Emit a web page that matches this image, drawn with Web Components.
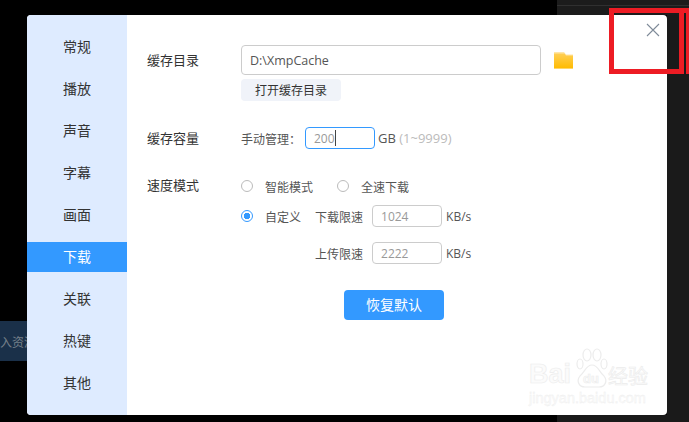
<!DOCTYPE html>
<html lang="zh-CN">
<head>
<meta charset="utf-8">
<title>设置</title>
<style>
html, body { margin: 0; padding: 0; background: #000; }
body { font-family: "Noto Sans CJK SC", "Open Sans", sans-serif; }
</style>
</head>
<body>
<xl-desktop>
  <xl-dialog>
    <xl-nav slot="nav">
      <xl-nav-item>常规</xl-nav-item>
      <xl-nav-item>播放</xl-nav-item>
      <xl-nav-item>声音</xl-nav-item>
      <xl-nav-item>字幕</xl-nav-item>
      <xl-nav-item>画面</xl-nav-item>
      <xl-nav-item active>下载</xl-nav-item>
      <xl-nav-item>关联</xl-nav-item>
      <xl-nav-item>热键</xl-nav-item>
      <xl-nav-item>其他</xl-nav-item>
    </xl-nav>
    <xl-field label="缓存目录" style="height:78px">
      <xl-dir-picker value="D:\XmpCache" action="打开缓存目录"></xl-dir-picker>
    </xl-field>
    <xl-field label="缓存容量" style="height:47px">
      <xl-cache-size value="200"></xl-cache-size>
    </xl-field>
    <xl-field label="速度模式">
      <xl-speed-mode></xl-speed-mode>
    </xl-field>
    <xl-button primary>恢复默认</xl-button>
  </xl-dialog>
</xl-desktop>

<script>
// small helper, every element renders the same way
class XlBase extends HTMLElement {
  constructor() {
    super();
    this.attachShadow({ mode: "open" });
  }
  connectedCallback() {
    this.shadowRoot.innerHTML = this.html;
  }
}

// what is left of the player window behind the dialog
class XlDesktop extends XlBase {
  get html() {
    return `
<style>
:host {
  display: block;
  position: relative;
  overflow: hidden;
  box-sizing: border-box;
  width: 689px;
  height: 422px;
  padding: 15px 0 0 27px;
  background-color: #000;
  background-image:
    linear-gradient(#1c1c1c, #1c1c1c),
    linear-gradient(#1a1a1a, #1a1a1a),
    linear-gradient(#1a1a1a, #1a1a1a);
  background-repeat: no-repeat;
  background-size: 132px 15px, 22px 422px, 132px 7px;
  background-position: 557px 0, 667px 0, 557px 415px;
}
.line {
  position: absolute;
  left: 557px;
  top: 5px;
  width: 132px;
  height: 1px;
  background: #303030;
}
.strip {
  position: absolute;
  left: 0;
  top: 321px;
  width: 27px;
  height: 40px;
  background: #1a3049;
  color: #77808a;
  font-size: 12px;
  line-height: 41px;
  white-space: nowrap;
}
.mark {
  position: absolute;
  left: 609px;
  top: 8px;
}
</style>
<div class="line"></div>
<div class="strip">入资源</div>
<slot></slot>
<xl-watermark></xl-watermark>
<svg class="mark" width="80" height="66" viewBox="0 0 80 66" fill="none" stroke="#ed1c24" stroke-width="5">
  <path d="M80 2.5H2.5V63.5H72.5V0"/>
  <path d="M79.5 0V66"/>
</svg>`;
  }
}

class XlDialog extends XlBase {
  get html() {
    return `
<style>
:host {
  display: flex;
  position: relative;
  overflow: hidden;
  width: 640px;
  height: 400px;
  border-radius: 4px;
  background: #fff;
  color: #333;
}
.main {
  flex: 1;
  padding: 30px 0 0 20px;
}
.close {
  position: absolute;
  top: 8px;
  right: 7px;
  width: 14px;
  height: 14px;
}
</style>
<slot name="nav"></slot>
<div class="main">
  <slot></slot>
</div>
<svg class="close" viewBox="0 0 14 14" fill="none" stroke="#7f8b99" stroke-width="1.1">
  <path d="M1 1L13 13M13 1L1 13"/>
</svg>`;
  }
}

class XlNav extends XlBase {
  get html() {
    return `
<style>
:host {
  display: flex;
  flex-direction: column;
  gap: 12px;
  box-sizing: border-box;
  flex: 0 0 100px;
  padding-top: 17px;
  background: #deebff;
}
</style>
<slot></slot>`;
  }
}

class XlNavItem extends XlBase {
  get html() {
    return `
<style>
:host {
  display: block;
  height: 30px;
  line-height: 28px;
  text-align: center;
  font-size: 14px;
  color: #333;
}
:host([active]) {
  background: #3399ff;
  color: #fff;
}
</style>
<slot></slot>`;
  }
}

class XlField extends XlBase {
  get html() {
    return `
<style>
:host {
  display: grid;
  grid-template-columns: 94px 1fr;
  align-items: start;
}
.label {
  font-size: 13px;
  line-height: 30px;
  color: #333;
}
</style>
<div class="label">${this.getAttribute("label")}</div>
<div><slot></slot></div>`;
  }
}

class XlInput extends XlBase {
  get html() {
    const caret = this.hasAttribute("focused") ? '<i class="caret"></i>' : "";
    return `
<style>
:host {
  display: flex;
  align-items: center;
  box-sizing: border-box;
  flex: 0 0 70px;
  width: 70px;
  height: 22px;
  padding-left: 8px;
  border: 1px solid #ccc;
  border-radius: 4px;
  background: #fff;
  color: #999;
  font-family: "Open Sans", "Noto Sans CJK SC", sans-serif;
  font-size: 12px;
}
:host([focused]) { border-color: #3399ff; }
.caret {
  width: 1px;
  height: 16px;
  background: #444;
}
</style>
<span>${this.getAttribute("value")}</span>${caret}`;
  }
}

class XlDirPicker extends XlBase {
  get html() {
    return `
<style>
:host { display: block; }
.row {
  display: flex;
  align-items: center;
  gap: 12px;
}
.path {
  box-sizing: border-box;
  width: 300px;
  height: 30px;
  padding-left: 8px;
  border: 1px solid #ccc;
  border-radius: 4px;
  color: #555;
  font-family: "Open Sans", sans-serif;
  font-size: 12.5px;
  line-height: 29px;
}
.open {
  width: 100px;
  height: 22px;
  margin-top: 4px;
  border-radius: 4px;
  background: #f0f3f9;
  color: #333;
  font-size: 12px;
  line-height: 22px;
  text-align: center;
}
</style>
<div class="row">
  <div class="path">${this.getAttribute("value")}</div>
  <svg width="21" height="18" viewBox="0 0 21 18">
    <defs>
      <linearGradient id="f" x1="0" y1="0" x2="0" y2="1">
        <stop offset="0" stop-color="#ffcf55"/>
        <stop offset="1" stop-color="#ffbb00"/>
      </linearGradient>
    </defs>
    <path d="M1 1H11L13 3.5H20V17.5H1Z" fill="#ffe6a8"/>
    <path d="M1 2.5H11.5L13 4.5H20V17.5H1Z" fill="url(#f)"/>
  </svg>
</div>
<div class="open">${this.getAttribute("action")}</div>`;
  }
}

class XlCacheSize extends XlBase {
  get html() {
    return `
<style>
:host {
  display: flex;
  align-items: center;
  height: 22px;
  margin-top: 4px;
  font-size: 12px;
  color: #555;
}
.lead { width: 64px; }
.unit {
  margin-left: 3px;
  font-family: "Open Sans", sans-serif;
  font-size: 13px;
}
.unit span { color: #bbb; }
</style>
<div class="lead">手动管理：</div>
<xl-input focused value="${this.getAttribute("value")}"></xl-input>
<div class="unit">GB <span>(1~9999)</span></div>`;
  }
}

class XlRadio extends XlBase {
  get html() {
    return `
<style>
:host {
  display: inline-flex;
  align-items: center;
  gap: 12px;
  font-size: 12px;
  color: #555;
}
.dot {
  box-sizing: border-box;
  width: 12px;
  height: 12px;
  border: 1px solid #bbb;
  border-radius: 50%;
  background: #fff;
}
:host([checked]) .dot {
  border-color: #3399ff;
  background: radial-gradient(circle, #3399ff 0 3px, #fff 3.5px);
}
</style>
<div class="dot"></div>
<slot></slot>`;
  }
}

class XlSpeedMode extends XlBase {
  get html() {
    return `
<style>
:host {
  display: flex;
  flex-direction: column;
  margin-top: 5px;
  font-size: 12px;
  color: #555;
}
.row {
  display: flex;
  align-items: center;
  height: 22px;
}
.custom { margin-top: 8px; }
.upload { margin-top: 15px; padding-left: 74px; }
xl-radio + xl-radio { margin-left: 24px; }
.custom xl-radio { margin-right: 14px; }
.t { margin-right: 9px; }
.u {
  margin-left: 4px;
  font-family: "Open Sans", sans-serif;
}
</style>
<div class="row">
  <xl-radio>智能模式</xl-radio>
  <xl-radio>全速下载</xl-radio>
</div>
<div class="row custom">
  <xl-radio checked>自定义</xl-radio>
  <div class="t">下载限速</div>
  <xl-input value="1024"></xl-input>
  <div class="u">KB/s</div>
</div>
<div class="row upload">
  <div class="t">上传限速</div>
  <xl-input value="2222"></xl-input>
  <div class="u">KB/s</div>
</div>`;
  }
}

class XlButton extends XlBase {
  get html() {
    return `
<style>
:host {
  display: block;
  width: 100px;
  height: 30px;
  margin: 26px 0 0 197px;
  border-radius: 4px;
  background: #3399ff;
  color: #fff;
  font-size: 14px;
  line-height: 29px;
  text-align: center;
}
</style>
<slot></slot>`;
  }
}

// site stamp pasted over the corner of the screenshot
class XlWatermark extends XlBase {
  get html() {
    return `
<style>
:host {
  position: absolute;
  left: 529px;
  top: 348px;
  width: 124px;
  height: 58px;
  color: #fbfbfb;
  -webkit-text-stroke: 0.6px #ececec;
}
div, svg { position: absolute; }
.bai {
  left: 0;
  top: 11px;
  font: bold 27px/30px "Liberation Sans", sans-serif;
}
.du {
  left: 54px;
  top: 24px;
  font: bold 13px/14px "Liberation Sans", sans-serif;
}
.jing {
  left: 79px;
  top: 16px;
  font: 20px/24px "Noto Sans CJK SC", sans-serif;
}
.site {
  left: 0;
  top: 43px;
  font: 14.5px/15px "Liberation Sans", sans-serif;
  -webkit-text-stroke: 0.3px #ececec;
}
</style>
<svg style="left:47px;top:0" width="32" height="40" viewBox="0 0 32 40" fill="none" stroke="#ececec" stroke-width="1.2">
  <ellipse cx="11" cy="7" rx="4" ry="6"/>
  <ellipse cx="21" cy="7" rx="4" ry="6"/>
  <ellipse cx="4" cy="16" rx="3" ry="5"/>
  <ellipse cx="28" cy="16" rx="3" ry="5"/>
  <path d="M16 17C10 17 9 24 4 28C0 33 3 39 9 39H23C29 39 32 33 28 28C23 24 22 17 16 17Z"/>
</svg>
<div class="bai">Bai</div>
<div class="du">du</div>
<div class="jing">经验</div>
<div class="site">jingyan.baidu.com</div>`;
  }
}

customElements.define("xl-watermark", XlWatermark);
customElements.define("xl-input", XlInput);
customElements.define("xl-radio", XlRadio);
customElements.define("xl-button", XlButton);
customElements.define("xl-dir-picker", XlDirPicker);
customElements.define("xl-cache-size", XlCacheSize);
customElements.define("xl-speed-mode", XlSpeedMode);
customElements.define("xl-field", XlField);
customElements.define("xl-nav-item", XlNavItem);
customElements.define("xl-nav", XlNav);
customElements.define("xl-dialog", XlDialog);
customElements.define("xl-desktop", XlDesktop);
</script>
</body>
</html>
